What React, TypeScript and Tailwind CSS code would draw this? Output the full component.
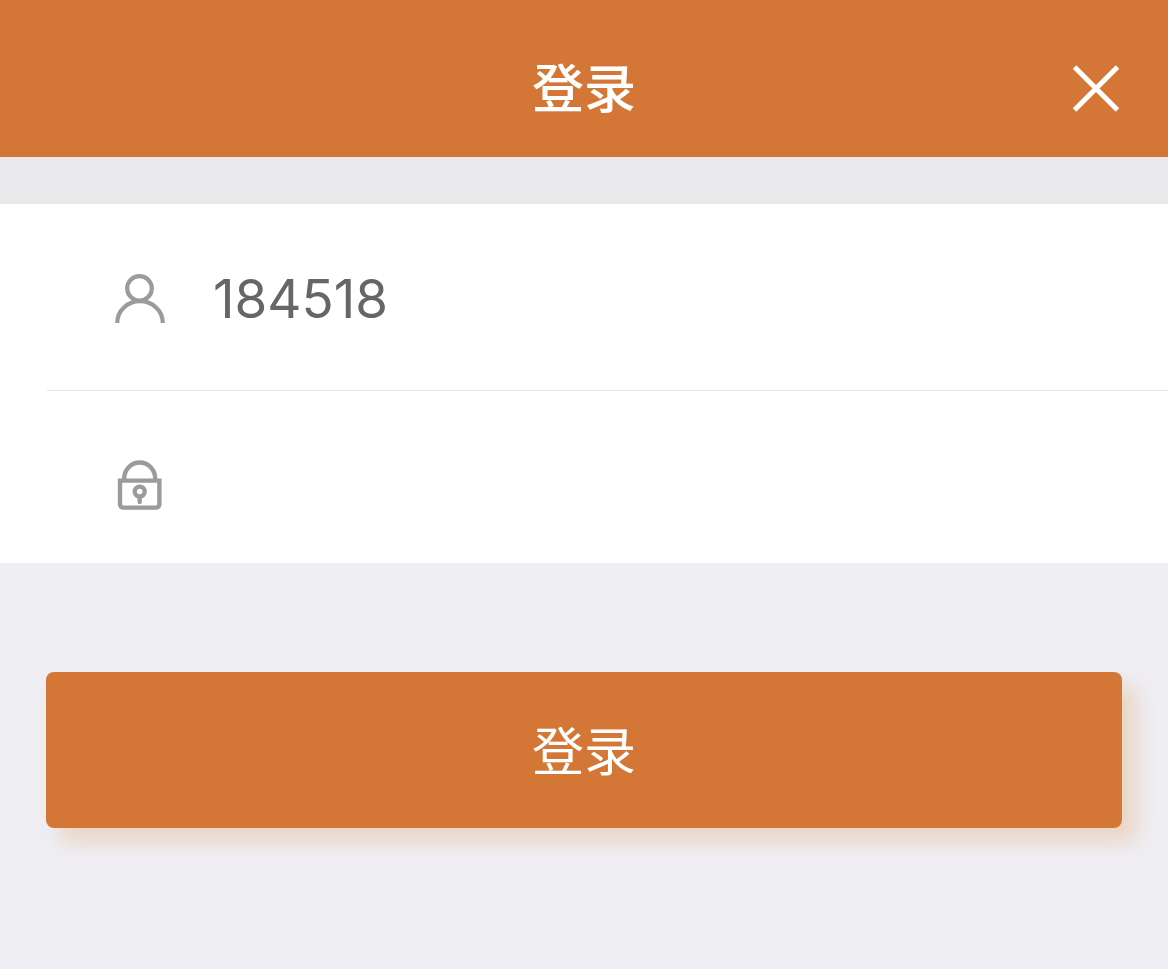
import React, { useState } from 'react';

const UserIcon: React.FC = () => (
    <svg width="50" height="50" viewBox="0 0 50 50" fill="none" stroke="#9b9b9b" strokeWidth="4.2" aria-hidden="true">
        <circle cx="24.5" cy="14.4" r="12.3" />
        <path d="M2.2 49C2.2 36.5 12.5 27.2 25 27.2S47.8 36.5 47.8 49" />
    </svg>
);

const LockIcon: React.FC = () => (
    <svg width="50" height="50" viewBox="0 0 50 50" fill="none" stroke="#9b9b9b" strokeWidth="4.4" aria-hidden="true">
        <path d="M9.2 20.5V18.5A15.5 16 0 0 1 40.2 18.5V20.5" />
        <path d="M5 20.6H44.4V44C44.4 46.2 43 47.6 41 47.6H8.4C6.4 47.6 5 46.2 5 44Z" />
        <circle cx="24.7" cy="31.6" r="5" />
        <path d="M24.7 36.5V42" strokeLinecap="round" />
    </svg>
);

const CloseIcon: React.FC = () => (
    <svg width="48" height="48" viewBox="0 0 48 48" fill="none" stroke="#ffffff" strokeWidth="5" aria-hidden="true">
        <path d="M2.5 2L45.5 45M45.5 2L2.5 45" />
    </svg>
);

const App: React.FC = () => {
    const [account, setAccount] = useState('184518');
    const [password, setPassword] = useState('');

    return (
        <div className="min-h-screen bg-[#efeef3] font-['Inter','Noto_Sans_CJK_SC',sans-serif]">
            <header className="grid h-[157px] grid-cols-[1fr_auto_1fr] items-center bg-[#d47736] px-12 pt-5 text-white">
                <h1 className="col-start-2 pt-0.5 text-[52px] leading-none font-medium">登录</h1>
                <button type="button" aria-label="关闭" className="justify-self-end">
                    <CloseIcon />
                </button>
            </header>

            <form onSubmit={(e) => e.preventDefault()}>
                <div className="border-t-[47px] border-[#e9e9eb] bg-white pl-[47px]">
                    <div className="flex h-[187px] items-center gap-12 border-b border-[#e3e3e3] pt-1 pl-[68px]">
                        <label htmlFor="account" aria-label="账号">
                            <UserIcon />
                        </label>
                        <input
                            id="account"
                            type="text"
                            value={account}
                            onChange={(e) => setAccount(e.target.value)}
                            className="min-w-0 flex-1 pt-0.5 text-[53px] text-[#666666] outline-none"
                        />
                    </div>
                    <div className="flex h-[172px] items-center gap-12 pt-4 pl-[68px]">
                        <label htmlFor="password" aria-label="密码">
                            <LockIcon />
                        </label>
                        <input
                            id="password"
                            type="password"
                            value={password}
                            onChange={(e) => setPassword(e.target.value)}
                            className="min-w-0 flex-1 pt-0.5 text-[53px] text-[#666666] outline-none"
                        />
                    </div>
                </div>

                <div className="px-[46px] pt-[109px]">
                    <button
                        type="submit"
                        className="h-[156px] w-full rounded-lg bg-[#d47736] pt-1.5 text-[52px] text-white shadow-[14px_14px_20px_rgba(222,140,60,0.25)]"
                    >
                        登录
                    </button>
                </div>
            </form>
        </div>
    );
};

export default App;
